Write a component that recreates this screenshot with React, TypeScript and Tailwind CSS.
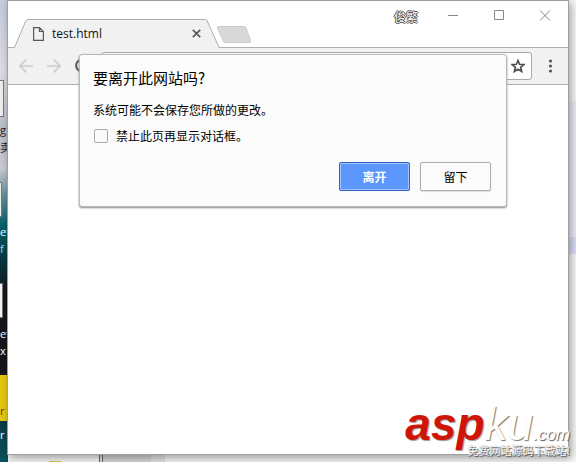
import React from "react";

const ui = "font-['Open_Sans','Noto_Sans_CJK_SC',sans-serif]";
const cjk = "font-['Noto_Sans_CJK_SC',sans-serif]";

function Desktop() {
  return (
    <div aria-hidden="true" className="absolute inset-0 overflow-hidden bg-[#f5f5f5]">
      <div className="absolute inset-y-0 left-0 w-2 bg-[linear-gradient(180deg,#c5c9d8_0px,#dcdde6_70px,#b9bdc8_130px,#c9cbd2_168px,#69909a_195px,#07616a_225px,#043f49_255px,#17171c_290px,#17151a_370px,#0c3b46_422px,#07535c_462px)]">
        <div className="absolute -left-3 top-[80px] h-[37px] w-4 border border-[#777] bg-[#eeeeec]" />
        <div className="absolute -left-3 top-[182px] h-[35px] w-[14px] border border-[#777] bg-[#eeeeec]" />
        <div className="absolute -left-3 top-[283px] h-[35px] w-[15px] border border-[#777] bg-[#f3f3f3]" />
        <div className="absolute left-0 top-[375px] h-[46px] w-2 bg-[#e6c710]" />
        <div className={`${ui} text-[11px] leading-[17px] text-white`}>
          <span className="absolute left-0 top-[121px] text-[#222]">g</span>
          <span className={`${cjk} absolute left-0 top-[139px] text-[#222]`}>卖</span>
          <span className="absolute left-0 top-[223px]">et</span>
          <span className="absolute left-0 top-[240px] text-[#9fd0ff]">f</span>
          <span className="absolute left-0 top-[325px]">et</span>
          <span className="absolute left-0 top-[342px]">x</span>
          <span className="absolute left-0 top-[402px] text-[#4a4210]">r</span>
          <span className="absolute left-0 top-[426px]">r</span>
        </div>
      </div>
      <div className="absolute right-0 top-[101px] h-[136px] w-3 bg-[#e9ebf8]" />
      <div className="absolute right-0 top-[237px] h-[17px] w-3 bg-[#dadcf5]" />
      <div className="absolute bottom-0 left-[99px] h-2 w-1 border-x border-[#666] bg-[#ddd]" />
      <div className="absolute bottom-0 left-[103px] h-2 w-12 bg-[#d4d4d4]" />
      <div className="absolute bottom-0 left-[151px] h-2 w-[14px] bg-[#e2e2e2]" />
      <div className="absolute bottom-0 left-[49px] h-px w-3 bg-[#dcc451]" />
    </div>
  );
}

function TabStrip() {
  return (
    <div className="flex h-[47px] items-end justify-between border-b border-[#b0b0b0]">
      <div className="flex items-end">
        <div className="relative ml-[5px] -mb-px h-[29px] w-[208px]">
          <svg className="absolute inset-0" width="208" height="29" viewBox="0 0 208 29" aria-hidden="true">
            <path d="M0 29 L1 28.5 L13 1.5 Q13.500 .5 15 .5 H192 Q193.500 .5 194 1.500 L206 28.500 L208 29 Z" fill="#f1f1f1" />
            <path d="M0 28.5 H1.500 L13 1.500 Q13.500 .5 15 .5 H192 Q193.500 .5 194 1.500 L206 28.500 H208" fill="none" stroke="#adadad" />
          </svg>
          <div className="relative flex h-full items-center pl-5 pr-[17px]">
            <svg width="11" height="14" viewBox="0 0 11 14" fill="none" stroke="#5a5a5a" strokeWidth="1.2" aria-hidden="true">
              <path d="M.6 .6H6.500L10.400 4.500V13.400H.6ZM6.500 .6V4.500H10.400" />
            </svg>
            <span className={`${ui} flex-1 pl-2 text-[12px] text-[#111]`}>test.html</span>
            <button type="button" aria-label="Close tab" className="flex size-4 items-center justify-center">
              <svg width="9" height="9" viewBox="0 0 9 9" stroke="#5a5a5a" strokeWidth="1.700" aria-hidden="true">
                <path d="M.8 .8L8.200 8.200M8.200 .8L.8 8.200" />
              </svg>
            </button>
          </div>
        </div>
        <button type="button" aria-label="New tab" className="mb-[3px] -ml-[5px]">
          <svg width="36" height="18" viewBox="0 0 36 18" aria-hidden="true">
            <path d="M2.500 .5H28Q29.500 .5 30 2L34.500 14.500Q35 16.500 33.500 16.500H9.500Q8 16.500 7.300 15L1.500 2.300Q1 .5 2.500 .5Z" fill="#d8d8d8" stroke="#cacaca" />
          </svg>
        </button>
      </div>
      <div className="flex h-full items-start">
        <button type="button" className={`${cjk} mr-[29px] mt-[7px] text-[12px] leading-[18px] text-white [text-shadow:1px_0_#444,-1px_0_#444,0_1px_#444,0_-1px_#444]`}>
          俊繁
        </button>
        <div className="flex gap-[34px] pr-[17px] pt-[9px]">
          <button type="button" aria-label="Minimize">
            <svg width="12" height="12" viewBox="0 0 12 12" stroke="#888"><path d="M1 5.500H11" /></svg>
          </button>
          <button type="button" aria-label="Maximize">
            <svg width="12" height="12" viewBox="0 0 12 12" fill="none" stroke="#888"><path d="M1.500 .5H10.500V9.500H1.500Z" /></svg>
          </button>
          <button type="button" aria-label="Close">
            <svg width="12" height="12" viewBox="0 0 12 12" stroke="#888"><path d="M1 .5L11 10.500M11 .5L1 10.500" /></svg>
          </button>
        </div>
      </div>
    </div>
  );
}

function Toolbar() {
  return (
    <div className="flex h-[37px] items-center border-b border-[#b0b0b0] bg-[#f1f1f1] pl-[11px] pr-[15px]">
      <button type="button" aria-label="Back">
        <svg width="14" height="14" viewBox="0 0 14 14" fill="none" stroke="#ccc" strokeWidth="1.700"><path d="M14 7H1M7.300 .7L1 7L7.300 13.300" /></svg>
      </button>
      <button type="button" aria-label="Forward" className="ml-[14px]">
        <svg width="14" height="14" viewBox="0 0 14 14" fill="none" stroke="#ccc" strokeWidth="1.700"><path d="M0 7H13M6.700 .7L13 7L6.700 13.300" /></svg>
      </button>
      <button type="button" aria-label="Reload" className="ml-[14px]">
        <svg width="14" height="14" viewBox="0 0 14 14" fill="none" stroke="#555" strokeWidth="2"><path d="M12 3A6 6 0 1 0 13 8M13 0V5H8" /></svg>
      </button>
      <div className="ml-3 flex h-7 flex-1 items-center rounded-[3px] border border-[#a9a9a9] bg-white pr-[6px]">
        <input aria-label="Address" className="min-w-0 flex-1 bg-transparent px-2 text-[12px] outline-none" />
        <button type="button" aria-label="Bookmark">
          <svg width="14" height="14" viewBox="0 0 14 14" fill="none" stroke="#4d4d4d" strokeWidth="1.600">
            <path d="M7 1.500L8.600 5.300L12.900 5.600L9.600 8.300L10.700 12.500L7 10.200L3.300 12.500L4.400 8.300L1.100 5.600L5.400 5.300Z" />
          </svg>
        </button>
      </div>
      <button type="button" aria-label="Menu" className="ml-4">
        <svg width="5" height="14" viewBox="0 0 5 14" fill="#555"><circle cx="2.500" cy="2" r="1.600" /><circle cx="2.500" cy="7" r="1.600" /><circle cx="2.500" cy="12" r="1.600" /></svg>
      </button>
    </div>
  );
}

function LeaveDialog() {
  return (
    <div role="dialog" aria-labelledby="leave-title" className={`${cjk} absolute left-[71px] top-[53px] w-[428px] rounded-[3px] border border-[#b9b9b9] bg-[#fbfbfb] px-[13px] pb-[15px] pt-[11px] text-black shadow-[0_1px_2px_#888]`}>
      <h1 id="leave-title" className="text-[15px] leading-6">要离开此网站吗?</h1>
      <p className="mt-[10px] text-[12px] leading-5">系统可能不会保存您所做的更改。</p>
      <label className="mt-[6px] flex items-center gap-2 pl-px text-[12px] leading-5">
        <input type="checkbox" className="size-[14px] appearance-none rounded-[2px] border border-[#aaa] bg-[#fafafa]" />
        禁止此页再显示对话框。
      </label>
      <div className="mt-4 flex justify-end gap-[10px] pr-[2px] text-[12px] leading-5">
        <button type="button" className="h-[29px] w-[71px] rounded-[2px] border border-[#2c62c4] bg-[#5b97fd] font-bold text-white shadow-[inset_0_0_0_1px_#a3c5ff]">离开</button>
        <button type="button" className="h-[29px] w-[71px] rounded-[2px] border border-[#adadad] bg-[#fbfbfb] shadow-[0_1px_1px_#ddd]">留下</button>
      </div>
    </div>
  );
}

function Watermark() {
  return (
    <div className="absolute bottom-1 right-[6px] flex flex-col items-end whitespace-nowrap font-['Liberation_Sans',Arial,sans-serif] italic">
      <div className="-mb-2 flex items-baseline leading-[30px]">
        <span className="text-[46px] font-bold text-[#cf1508] [text-shadow:1px_1px_1px_#999]">asp</span>
        <span className="text-[46px] text-[#fffffa] [text-shadow:1px_1px_1px_#777]">ku</span>
        <span className="text-[17px] text-white [text-shadow:1px_1px_1px_#555]">.com</span>
      </div>
      <div className={`${cjk} text-[11px] not-italic leading-4 text-white [text-shadow:1px_1px_1px_#444,0_0_1px_#777]`}>免费网站源码下载站!</div>
    </div>
  );
}

export default function App() {
  return (
    <div className="relative flex min-h-screen flex-col overflow-hidden px-[7px] pb-[7px]">
      <Desktop />
      <main className="relative flex flex-1 flex-col border border-[#a0a0a0] bg-white shadow-[2px_3px_8px_rgba(0,0,0,0.35)]">
        <TabStrip />
        <Toolbar />
        <LeaveDialog />
      </main>
      <Watermark />
    </div>
  );
}
